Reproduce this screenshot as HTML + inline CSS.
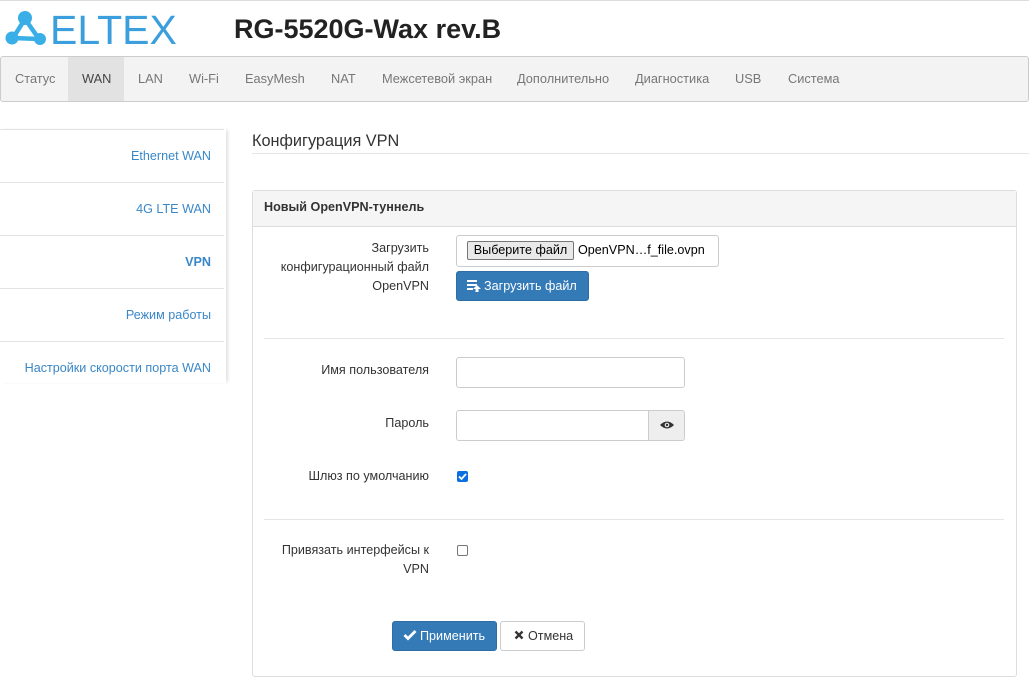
<!DOCTYPE html>
<html><head><meta charset="utf-8"><style>
*{box-sizing:border-box;margin:0;padding:0}
body{width:1029px;height:689px;background:#fff;font-family:"Liberation Sans",sans-serif;font-size:12.6px;color:#333;position:relative;overflow:hidden}
.a{position:absolute}
.nav span{position:absolute;top:0;height:44px;line-height:44px;color:#777;font-size:12.8px}
.side div{position:absolute;left:0;width:224px;height:53px;border-top:1px solid #e3e3e3;text-align:right;padding-right:13px;line-height:52px;color:#3a87c8;font-size:12.6px}
.lbl{position:absolute;right:600px;text-align:right;font-size:12.6px;color:#333;line-height:19px}
.inp{position:absolute;border:1px solid #ccc;border-radius:3px;background:#fff}
.cb{position:absolute;width:11px;height:11px;border:1px solid #767676;border-radius:2px;background:#fff}
</style></head><body>
<div class="a" style="left:0;top:0;width:1029px;height:1px;background:#ddd"></div>
<svg class="a" style="left:0;top:0" width="60" height="50">
<g stroke="#3aaee6" stroke-width="4.5" fill="none"><path d="M25 19 L13 38 L39 39 Z"/></g>
<g fill="#3aaee6"><circle cx="25" cy="18" r="7"/><circle cx="12" cy="38" r="6.5"/><circle cx="40" cy="39" r="6"/></g>
</svg>
<div class="a" style="left:50px;top:5px;font-size:41px;color:#3a9fdc;letter-spacing:0px;line-height:50px">ELTEX</div>
<div class="a" style="left:234px;top:14px;font-size:27px;font-weight:bold;color:#222">RG-5520G-Wax rev.B</div>
<div class="a nav" style="left:0;top:56px;width:1029px;height:46px;background:#f3f3f3;border:1px solid #ccc;border-radius:3px">
<span style="left:67px;width:56px;background:#e2e2e2"></span>
<span style="left:14px">Статус</span><span style="left:81px;color:#444">WAN</span><span style="left:137px">LAN</span><span style="left:188px">Wi-Fi</span><span style="left:244px">EasyMesh</span><span style="left:330px">NAT</span><span style="left:381px">Межсетевой экран</span><span style="left:516px">Дополнительно</span><span style="left:634px">Диагностика</span><span style="left:734px">USB</span><span style="left:787px">Система</span>
</div>
<div class="a side" style="left:0;top:129px;width:226px;height:254px;box-shadow:3px 0 3px -1px rgba(0,0,0,.12)">
<div style="top:0">Ethernet WAN</div><div style="top:53px">4G LTE WAN</div><div style="top:106px;font-weight:bold">VPN</div><div style="top:159px">Режим работы</div><div style="top:212px;height:42px">Настройки скорости порта WAN</div>
</div>
<div class="a" style="left:252px;top:132px;font-size:16.3px;color:#333">Конфигурация VPN</div>
<div class="a" style="left:252px;top:153px;width:777px;height:1px;background:#e5e5e5"></div>
<div class="a" style="left:252px;top:190px;width:765px;height:487px;border:1px solid #ddd;border-radius:3px">
<div style="height:36px;background:#f5f5f5;border-bottom:1px solid #ddd;padding:9px 11px;font-weight:bold;font-size:12.6px;color:#333">Новый OpenVPN-туннель</div>
</div>
<div class="lbl" style="top:239px">Загрузить<br>конфигурационный файл<br>OpenVPN</div>
<div class="inp" style="left:456px;top:235px;width:263px;height:32px"></div>
<div class="a" style="left:467px;top:241px;width:107px;height:19px;border:1px solid #777;background:#e9e9e9;border-radius:2px;font-size:12.6px;text-align:center;line-height:17px;color:#000">Выберите файл</div>
<div class="a" style="left:578px;top:243px;font-size:12.6px;color:#000">OpenVPN…f_file.ovpn</div>
<div class="a" style="left:456px;top:271px;width:133px;height:30px;background:#337ab7;border:1px solid #2e6da4;border-radius:3px;color:#fff;font-size:12.6px;line-height:28px;padding-left:27px">Загрузить файл</div>
<svg class="a" style="left:467px;top:280px" width="14" height="12"><g fill="#fff"><rect x="0" y="0" width="10" height="2"/><rect x="0" y="4" width="10" height="2"/><rect x="0" y="8" width="6" height="2"/><path d="M10 5 L14 9 L11.5 9 L11.5 12 L8.5 12 L8.5 9 L6 9 Z"/></g></svg>
<div class="a" style="left:264px;top:338px;width:740px;height:1px;background:#e5e5e5"></div>
<div class="lbl" style="top:361px">Имя пользователя</div>
<div class="inp" style="left:456px;top:357px;width:229px;height:31px"></div>
<div class="lbl" style="top:414px">Пароль</div>
<div class="inp" style="left:456px;top:410px;width:229px;height:31px;overflow:hidden"><div style="position:absolute;right:0;top:0;width:36px;height:31px;background:#eee;border-left:1px solid #ccc"></div></div>
<svg class="a" style="left:660px;top:420px" width="14" height="10"><path d="M0 5 Q7 -2 14 5 Q7 12 0 5Z" fill="#333"/><circle cx="7" cy="5" r="2.3" fill="#eee"/><circle cx="7" cy="5" r="1.2" fill="#333"/></svg>
<div class="lbl" style="top:467px">Шлюз по умолчанию</div>
<div class="a" style="left:457px;top:471px;width:11px;height:11px;background:#0b6fe0;border-radius:2px"><svg width="11" height="11" style="display:block"><path d="M2 5.5 L4.5 8 L9 3" stroke="#fff" stroke-width="1.8" fill="none"/></svg></div>
<div class="a" style="left:264px;top:519px;width:740px;height:1px;background:#e5e5e5"></div>
<div class="lbl" style="top:541px">Привязать интерфейсы к<br>VPN</div>
<div class="cb" style="left:457px;top:545px"></div>
<div class="a" style="left:392px;top:621px;width:105px;height:30px;background:#337ab7;border:1px solid #2e6da4;border-radius:3px;color:#fff;font-size:12.6px;line-height:28px;padding-left:27px">Применить</div>
<svg class="a" style="left:403px;top:629px" width="14" height="12"><path d="M1.5 6 L5 9.5 L12.5 2" stroke="#fff" stroke-width="2.8" fill="none"/></svg>
<div class="a" style="left:500px;top:621px;width:85px;height:30px;background:#fff;border:1px solid #ccc;border-radius:3px;color:#333;font-size:12.6px;line-height:28px;padding-left:27px">Отмена</div>
<svg class="a" style="left:514px;top:630px" width="10" height="10"><path d="M1.5 1.5 L8.5 8.5 M8.5 1.5 L1.5 8.5" stroke="#333" stroke-width="2.4"/></svg>
</body></html>
